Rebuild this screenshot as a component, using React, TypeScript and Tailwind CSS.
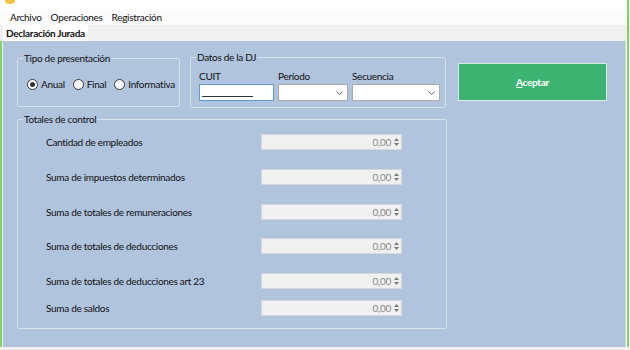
import React from "react";

const rows = [
  { label: "Cantidad de empleados", mt: "mt-[9px]" },
  { label: "Suma de impuestos determinados", mt: "mt-[19px]" },
  { label: "Suma de totales de remuneraciones", mt: "mt-[19px]" },
  { label: "Suma de totales de deducciones", mt: "mt-[18px]" },
  { label: "Suma de totales de deducciones art 23", mt: "mt-[19px]" },
  { label: "Suma de saldos", mt: "mt-[11px]" },
];

function Spinner() {
  return (
    <div className="w-[141px] h-[16px] bg-[#f0f0f0] border border-[#d4d8de] flex items-center justify-end">
      <span className="text-[10px] text-[#8a8a8a] leading-none mr-[2px]">0,00</span>
      <div className="w-[7px] h-full flex flex-col items-center justify-center gap-[2px] mr-[1px]">
        <svg width="5" height="3" viewBox="0 0 5 3"><path d="M0 3 L2.5 0 L5 3 Z" fill="#7a7a7a" /></svg>
        <svg width="5" height="3" viewBox="0 0 5 3"><path d="M0 0 L2.5 3 L5 0 Z" fill="#7a7a7a" /></svg>
      </div>
    </div>
  );
}

function Radio({ checked, label }: { checked?: boolean; label: string }) {
  return (
    <div className="flex items-center gap-[3px]">
      <div className="w-[11px] h-[11px] rounded-full border border-[#333] bg-white flex items-center justify-center">
        {checked && <div className="w-[5px] h-[5px] rounded-full bg-[#333]" />}
      </div>
      <span>{label}</span>
    </div>
  );
}

function Combo({ w }: { w: string }) {
  return (
    <div className={`${w} h-[17px] bg-white border border-[#a9a9a9] flex items-center justify-end pr-[4px]`}>
      <svg width="7" height="4" viewBox="0 0 7 4"><path d="M0.5 0.5 L3.5 3.5 L6.5 0.5" stroke="#555" fill="none" strokeWidth="0.9" /></svg>
    </div>
  );
}

export default function App() {
  return (
    <div
      className="w-[630px] h-[350px] bg-white overflow-hidden flex flex-col text-[10px] tracking-[-0.3px] text-[#111]"
      style={{ fontFamily: 'Lato, "Noto Sans", sans-serif' }}
    >
      {/* title bar fragment */}
      <div className="h-[9px] bg-white relative flex">
        <div className="ml-[5px] -mt-[4px] w-[10px] h-[8px] rounded-full bg-[#f6c445]" />
        <div className="flex-1" />
        <div className="w-[2px] bg-[#7ed36a] mr-[1px]" />
      </div>
      {/* menu bar */}
      <div className="h-[16px] bg-[#fbfbfb] flex items-center">
        <div className="flex items-center gap-[9px] pl-[10px]">
          <span>Archivo</span>
          <span>Operaciones</span>
          <span>Registración</span>
        </div>
        <div className="flex-1" />
        <div className="w-[2px] self-stretch bg-[#7ed36a] mr-[1px]" />
      </div>
      {/* tab strip */}
      <div className="h-[16px] bg-[#f0f0f0] flex items-end">
        <div className="ml-[3px] h-[16px] px-[3px] bg-white flex items-center font-bold">Declaración Jurada</div>
        <div className="flex-1" />
        <div className="w-[2px] self-stretch bg-[#7ed36a] mr-[1px]" />
      </div>
      {/* content */}
      <div className="flex h-[306px]">
        <div className="w-[2px] bg-[#7ed36a]" />
        <div className="w-[1px] bg-[#f0f0f0]" />
        <div className="w-[622px] bg-[#b0c4de] pl-[14px] pt-[10px] flex flex-col">
          <div className="flex items-start">
            <fieldset className="min-w-0 w-[163px] h-[55px] border border-[#d6dfea] rounded-[2px] mt-[1px]">
              <legend className="ml-[5px] px-[1px] leading-[12px]">Tipo de presentación</legend>
              <div className="flex items-center gap-[8px] pl-[9px] mt-[13px]">
                <Radio checked label="Anual" />
                <Radio label="Final" />
                <Radio label="Informativa" />
              </div>
            </fieldset>
            <fieldset className="min-w-0 ml-[10px] w-[256px] h-[57px] border border-[#d6dfea] rounded-[2px]">
              <legend className="ml-[5px] px-[1px] leading-[12px]">Datos de la DJ</legend>
              <div className="flex gap-[4px] pl-[8px] mt-[7px]">
                <div className="flex flex-col gap-[2px]">
                  <span className="leading-[12px]">CUIT</span>
                  <div className="w-[75px] h-[17px] bg-white border border-[#5b9bd5] flex items-end pl-[2px] pb-[3px]">
                    <div className="w-[51px] h-[1px] bg-[#333]" />
                  </div>
                </div>
                <div className="flex flex-col gap-[2px]">
                  <span className="leading-[12px]">Período</span>
                  <Combo w="w-[70px]" />
                </div>
                <div className="flex flex-col gap-[2px]">
                  <span className="leading-[12px]">Secuencia</span>
                  <Combo w="w-[88px]" />
                </div>
              </div>
            </fieldset>
            <div className="ml-[12px] mt-[12px] w-[149px] h-[38px] bg-[#3cb371] border border-[#d9eadf] flex items-center justify-center text-white font-bold text-[10px]">
              <span><span className="underline">A</span>ceptar</span>
            </div>
          </div>
          <fieldset className="min-w-0 mt-[5px] w-[430px] h-[216px] border border-[#d6dfea] rounded-[2px]">
            <legend className="ml-[5px] px-[1px] leading-[12px]">Totales de control</legend>
            {rows.map((r, i) => (
              <div key={i} className={`${r.mt} flex items-center pl-[28px] h-[16px]`}>
                <span className="w-[215px]">{r.label}</span>
                <Spinner />
              </div>
            ))}
          </fieldset>
        </div>
        <div className="w-[1px] bg-[#d0d0d0]" />
        <div className="w-[1px] bg-white" />
        <div className="w-[2px] bg-[#7ed36a]" />
        <div className="w-[1px] bg-white" />
      </div>
      <div className="flex-1 bg-[#f0f0f0]" />
    </div>
  );
}
